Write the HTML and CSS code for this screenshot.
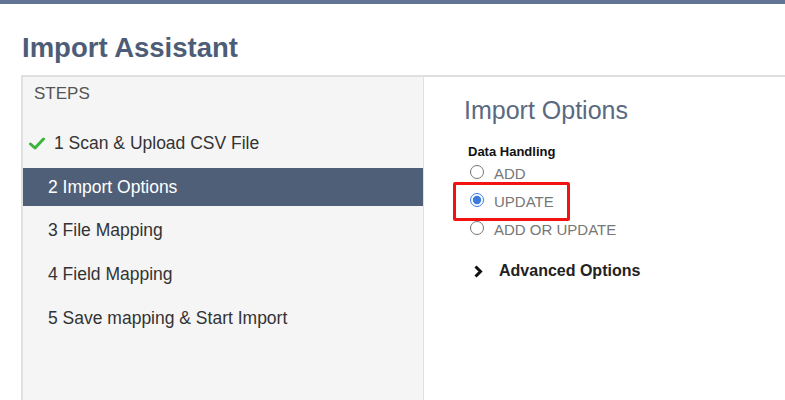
FILE: index.html
```html
<!DOCTYPE html>
<html lang="en">
<head>
  <meta charset="UTF-8"/>
  <meta name="viewport" content="width=device-width, initial-scale=1.0"/>
  <title>Import Assistant</title>
  <link rel="stylesheet" href="styles.css">
</head>
<body>
  <div class="topbar"></div>
  <h1 class="page-title">Import Assistant</h1>

  <div class="wizard">
    <aside class="steps">
      <div class="steps-head">STEPS</div>
      <ul class="step-list">
        <li class="step done">
          <svg class="check" width="16" height="13" viewBox="0 0 16 13"><path d="M1.5 7 L6 11 L14.5 2" fill="none" stroke="#3cb33c" stroke-width="3" stroke-linecap="round" stroke-linejoin="round"/></svg>1 Scan &amp; Upload CSV File
        </li>
        <li class="step active">2 Import Options</li>
        <li class="step">3 File Mapping</li>
        <li class="step">4 Field Mapping</li>
        <li class="step">5 Save mapping &amp; Start Import</li>
      </ul>
    </aside>

    <section class="pane">
      <h2 class="pane-title">Import Options</h2>
      <div class="field">
        <div class="field-label">Data Handling</div>
        <label class="radio"><input type="radio" name="mode"/>ADD</label>
        <label class="radio"><input type="radio" name="mode" checked/>UPDATE<span class="mark"></span></label>
        <label class="radio"><input type="radio" name="mode"/>ADD OR UPDATE</label>
      </div>
      <div class="advanced">
        <svg class="chevron" width="10" height="13" viewBox="0 0 10 13"><path d="M2.5 1.5 L7.5 6.5 L2.5 11.5" fill="none" stroke="#111" stroke-width="3"/></svg>Advanced Options
      </div>
    </section>
  </div>
</body>
</html>
```

FILE: styles.css
```css
body { margin: 0; background: #fff; font-family: "Liberation Sans", Arial, sans-serif; color: #333; }
.topbar { height: 4px; background: #627493; }
.page-title { margin: 28px 0 12px 22px; font-size: 27.5px; line-height: 31px; font-weight: bold; color: #4d5c77; }

.wizard { display: flex; margin-left: 21px; border-top: 2px solid #e0e0e0; min-height: 330px; }
.steps { width: 400px; flex: none; background: #f5f5f5; border-left: 2px solid #e0e0e0; border-right: 1px solid #e0e0e0; }
.steps-head { padding: 7px 0 0 11px; font-size: 17px; line-height: 20px; color: #555; }
.step-list { list-style: none; margin: 20px 0 0; padding: 0; }
.step { height: 38px; line-height: 38px; margin-bottom: 6px; padding-left: 25px; font-size: 17.5px; color: #333; }
.step.done { padding-left: 6px; display: flex; align-items: center; }
.step.active { margin-bottom: 5px; background: #505f78; color: #fff; }
.check { margin-right: 9px; }

.pane { flex: 1; padding-left: 40px; }
.pane-title { margin: 18px 0 18px; font-size: 25px; line-height: 30px; font-weight: normal; color: #5a6980; }
.field { margin-left: 4px; }
.field-label { font-size: 13px; line-height: 17px; font-weight: bold; color: #111; }
.radio { position: relative; display: block; font-size: 15px; line-height: 28px; color: #777; }
.radio input { margin: 0 10px 2px 2px; width: 14px; height: 14px; accent-color: #3b7be0; }
.mark { position: absolute; left: -15px; top: -6px; width: 111px; height: 33px; border: 3px solid #f21212; border-radius: 2px; }

.advanced { display: flex; align-items: center; margin: 17px 0 0 9px; font-size: 16px; line-height: 20px; font-weight: bold; color: #222; }
.chevron { margin-right: 16px; }
```
